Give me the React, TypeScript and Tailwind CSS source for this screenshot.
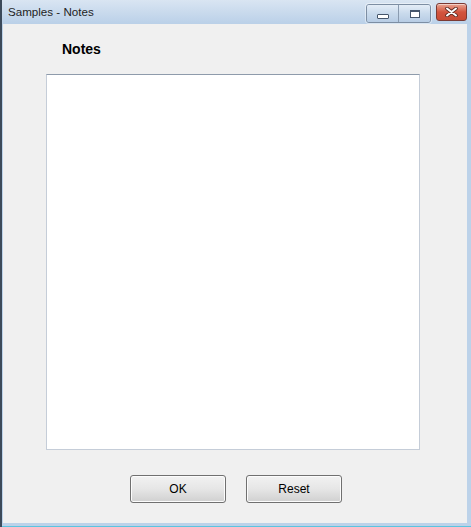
import React from 'react';

const CaptionButton = ({ kind }: { kind: 'min' | 'max' | 'close' }) => {
  if (kind === 'close') {
    return (
      <div className="flex h-[18px] w-[31px] items-center justify-center rounded-[3px] border border-[#7b3a34] bg-gradient-to-b from-[#e8a493] via-[#d2543e] to-[#c84a34] shadow-[inset_0_1px_0_rgba(255,255,255,0.5)]">
        <svg width="13" height="10" viewBox="0 0 13 10">
          <path d="M2 1.5 L11 8.5 M11 1.5 L2 8.5" stroke="#5a2a22" strokeWidth="3.6" strokeLinecap="round" />
          <path d="M2 1.5 L11 8.5 M11 1.5 L2 8.5" stroke="#ffffff" strokeWidth="2" strokeLinecap="round" />
        </svg>
      </div>
    );
  }
  return (
    <div className="flex h-[17px] w-[31px] items-center justify-center bg-gradient-to-b from-[#e4edf7] via-[#c9daec] to-[#b7cce4]">
      {kind === 'min' ? (
        <div className="mt-[5px] h-[5px] w-[12px] rounded-[1px] border border-[#45556b] bg-white" />
      ) : (
        <div className="h-[8px] w-[10px] border border-[#45556b] border-t-2 bg-white" />
      )}
    </div>
  );
};

export default function App() {
  return (
    <div
      className="flex h-[527px] w-[471px] flex-col overflow-hidden border-l-2 border-l-[#3c4a5a] bg-[#bcd2e9]"
      style={{ fontFamily: '"Liberation Sans", Arial, sans-serif' }}
    >
      {/* Title bar */}
      <div className="flex h-[24px] shrink-0 items-start bg-gradient-to-b from-[#d9e5f2] to-[#bad0e8] pr-[4px]">
        <span className="ml-[6px] mt-[5px] text-[11.6px] leading-[14px] text-[#1e1e1e]">Samples - Notes</span>
        <div className="ml-auto mt-[4px] flex items-start">
          <div className="flex overflow-hidden rounded-[3px] border border-[#7d8ea3] shadow-[0_0_0_1px_rgba(255,255,255,0.45)]">
            <CaptionButton kind="min" />
            <div className="w-px bg-[#8a9bb0]" />
            <CaptionButton kind="max" />
          </div>
          <div className="ml-[5px] -mt-px">
            <CaptionButton kind="close" />
          </div>
        </div>
      </div>

      {/* Client area */}
      <div className="ml-px mr-[4px] mb-[3px] flex flex-1 flex-col bg-[#f0f0f0]">
        <div className="pl-[59px] pt-[17px] text-[14px] font-bold leading-[16px] text-black">Notes</div>
        <textarea
          className="ml-[43px] mt-[17px] h-[376px] w-[374px] resize-none border border-[#c5cdd8] border-t-[#8e9bab] bg-white outline-none"
          defaultValue=""
        />
        <div className="mt-[25px] flex justify-center gap-[20px] pl-[2px]">
          {['OK', 'Reset'].map((label) => (
            <button
              key={label}
              className="h-[28px] w-[96px] rounded-[3px] border border-[#707070] bg-gradient-to-b from-[#f2f2f2] via-[#e6e6e6] to-[#d0d0d0] text-[12px] text-black shadow-[inset_0_0_0_1px_#fcfcfc]"
            >
              {label}
            </button>
          ))}
        </div>
      </div>
      <div className="h-[1px] shrink-0 bg-[#5bc4e0]" />
    </div>
  );
}
